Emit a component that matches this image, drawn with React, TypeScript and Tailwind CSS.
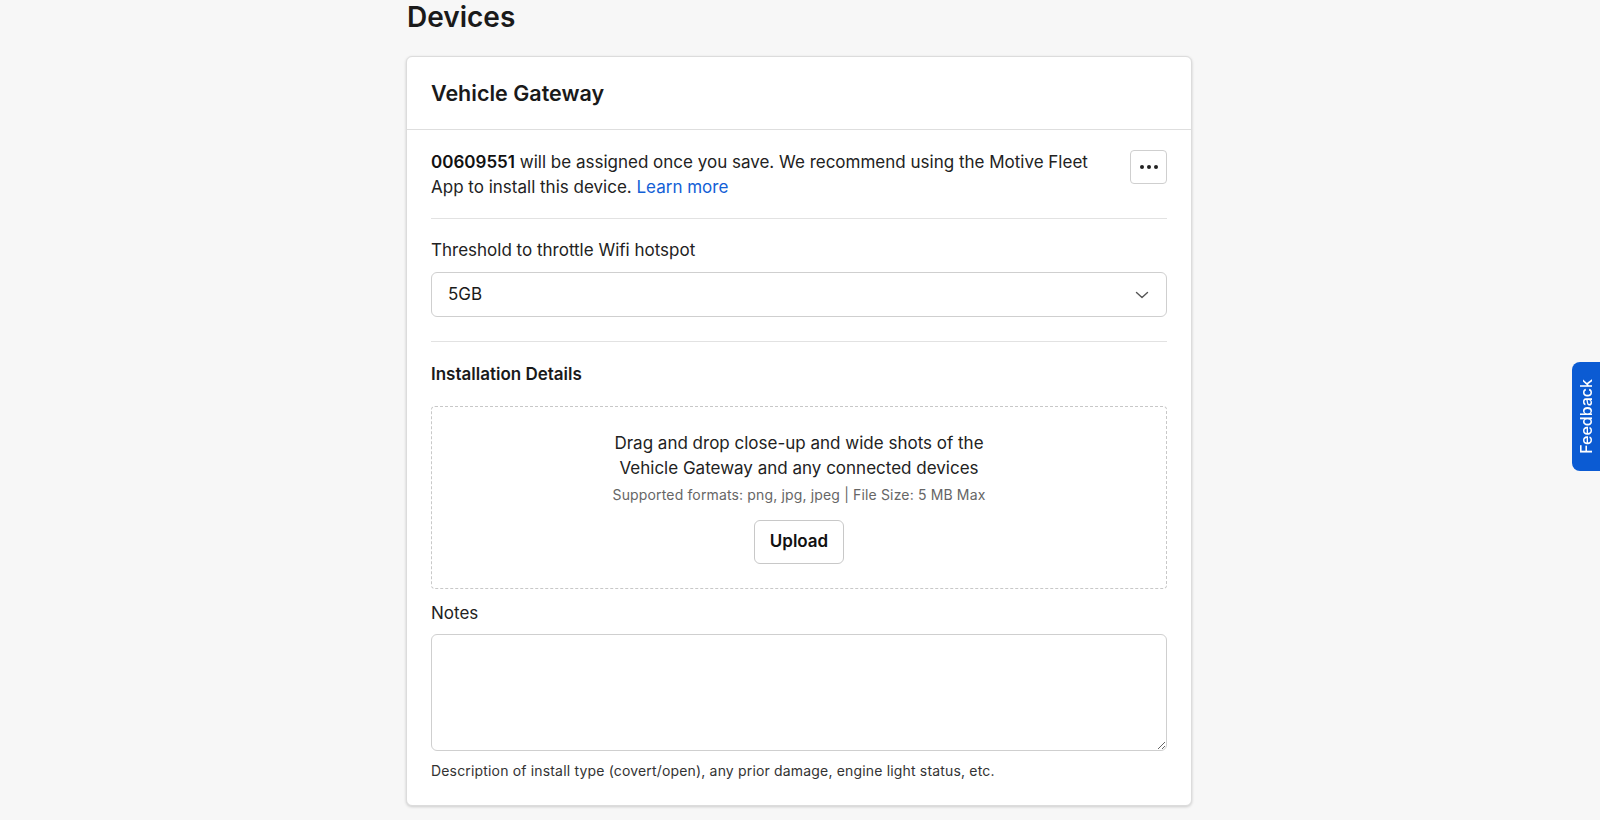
import { useState } from "react";

const THRESHOLDS = ["1GB", "2GB", "5GB", "10GB", "Unlimited"];

function Chevron() {
  return (
    <svg width="16" height="16" viewBox="0 0 16 16" fill="none" className="text-[#555]">
      <path d="M2.5 5.5L8 10.5L13.5 5.5" stroke="currentColor" strokeWidth="1.4" strokeLinecap="round" strokeLinejoin="round" />
    </svg>
  );
}

export default function App() {
  const [threshold, setThreshold] = useState("5GB");
  const [notes, setNotes] = useState("");

  return (
    <div className="min-h-screen bg-[#f7f7f7] text-[#1a1a1a] font-['Inter','Liberation_Sans',sans-serif]">
      <main className="w-[788px] mx-auto pr-[2px] pt-px">
        <h1 className="text-[28px] leading-8 font-semibold pl-px">Devices</h1>

        <section className="mt-[23px] bg-white border border-[#dcdcdc] rounded-md shadow-[0_1px_3px_rgba(0,0,0,0.18)]">
          <div className="px-6 py-[22px] border-b border-[#dedede]">
            <h2 className="text-[21.5px] leading-7 font-semibold">Vehicle Gateway</h2>
          </div>

          <div className="px-6 pt-5 pb-6">
            <div className="flex items-start justify-between gap-6">
              <p className="text-[17px] leading-[25px] text-[#222]">
                <span className="font-semibold text-[#111]">00609551</span> will be assigned once you save. We recommend using the Motive Fleet App to install this device.{" "}
                <a href="#" className="text-[#1360d6]">Learn more</a>
              </p>
              <button className="shrink-0 w-[37px] h-[34px] flex items-center justify-center gap-[3px] border border-[#cfcfcf] rounded bg-white">
                <span className="w-[4px] h-[4px] rounded-full bg-[#222]" />
                <span className="w-[4px] h-[4px] rounded-full bg-[#222]" />
                <span className="w-[4px] h-[4px] rounded-full bg-[#222]" />
              </button>
            </div>

            <div className="mt-[18px] mb-5 border-t border-[#e2e2e2]" />

            <label className="block text-[17px] leading-6 text-[#222] mt-[-1px]">Threshold to throttle Wifi hotspot</label>
            <div className="relative mt-[10px]">
              <select
                value={threshold}
                onChange={(e) => setThreshold(e.target.value)}
                className="appearance-none w-full h-[45px] pl-4 pr-10 border border-[#cfcfcf] rounded-md bg-white text-[17px] text-[#1a1a1a] outline-none"
              >
                {THRESHOLDS.map((t) => (
                  <option key={t} value={t}>{t}</option>
                ))}
              </select>
              <span className="absolute right-[17px] top-[15px] pointer-events-none">
                <Chevron />
              </span>
            </div>

            <div className="mt-6 mb-5 border-t border-[#e2e2e2]" />

            <h3 className="text-[17px] leading-6 font-semibold">Installation Details</h3>

            <div className="mt-5 border border-dashed border-[#c8c8c8] rounded pt-6 pb-6 flex flex-col items-center text-center">
              <p className="text-[17px] leading-[25px] text-[#222] w-[400px]">
                Drag and drop close-up and wide shots of the Vehicle Gateway and any connected devices
              </p>
              <p className="mt-1 text-[14px] leading-5 tracking-[0.15px] text-[#666]">
                Supported formats: png, jpg, jpeg | File Size: 5 MB Max
              </p>
              <button className="mt-[15px] w-[90px] h-[44px] border border-[#c8c8c8] rounded-md bg-white text-[17px] font-semibold text-[#111]">
                Upload
              </button>
            </div>

            <label className="block mt-3 text-[17px] leading-6 text-[#222]">Notes</label>
            <textarea
              value={notes}
              onChange={(e) => setNotes(e.target.value)}
              className="block mt-[9px] w-full h-[117px] border border-[#cfcfcf] rounded-md bg-white px-3 py-2 text-[16px] outline-none resize-y"
            />
            <p className="mt-[10px] text-[14px] leading-5 tracking-[0.17px] text-[#333]">
              Description of install type (covert/open), any prior damage, engine light status, etc.
            </p>
          </div>
        </section>
      </main>

      <button className="fixed right-0 top-[362px] w-[28px] h-[109px] bg-[#0b5bd3] rounded-l-lg flex items-center justify-center">
        <span className="text-white text-[16px] font-medium [writing-mode:vertical-rl] rotate-180">Feedback</span>
      </button>
    </div>
  );
}
